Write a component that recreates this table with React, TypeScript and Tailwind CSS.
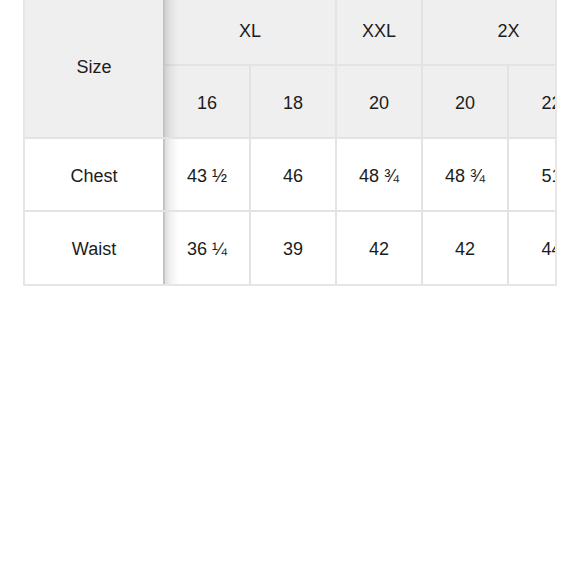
import React from 'react';

const SUB = ['16', '18', '20', '20', '22'];
const ROWS = [
  { label: 'Chest', values: ['43 ½', '46', '48 ¾', '48 ¾', '51'] },
  { label: 'Waist', values: ['36 ¼', '39', '42', '42', '44'] },
];

function Shade() {
  return (
    <div className="pointer-events-none absolute top-0 bottom-0 left-full z-10 w-[16px] bg-linear-to-r from-black/15 via-black/5 to-transparent" />
  );
}

export default function App() {
  const cell = 'border-2 border-[#e3e3e3] pt-[3px] text-center align-middle font-normal';
  return (
    <div className="min-h-[580px] w-[580px] overflow-hidden bg-white text-[18px] text-[#1c1c1c] [font-family:'Liberation_Sans',Arial,sans-serif]">
      <div className="-mt-[7px] ml-[23px] w-[534px] overflow-hidden border-2 border-[#e6e6e6]">
        <table className="w-[569px] table-fixed border-collapse border-hidden">
          <colgroup>
            <col className="w-[139px]" />
            {SUB.map((_, i) => (
              <col key={i} className="w-[86px]" />
            ))}
          </colgroup>
          <thead className="bg-[#efefef]">
            <tr className="h-[70px]">
              <th rowSpan={2} className={`${cell} relative`}>
                Size
                <Shade />
              </th>
              <th colSpan={2} className={cell}>XL</th>
              <th className={cell}>XXL</th>
              <th colSpan={2} className={cell}>2X</th>
            </tr>
            <tr className="h-[73px]">
              {SUB.map((s, i) => (
                <th key={i} className={cell}>{s}</th>
              ))}
            </tr>
          </thead>
          <tbody>
            {ROWS.map((r) => (
              <tr key={r.label} className="h-[73px]">
                <td className={`${cell} relative`}>
                  {r.label}
                  <Shade />
                </td>
                {r.values.map((v, i) => (
                  <td key={i} className={`${cell} whitespace-nowrap`}>{v}</td>
                ))}
              </tr>
            ))}
          </tbody>
        </table>
      </div>
    </div>
  );
}
